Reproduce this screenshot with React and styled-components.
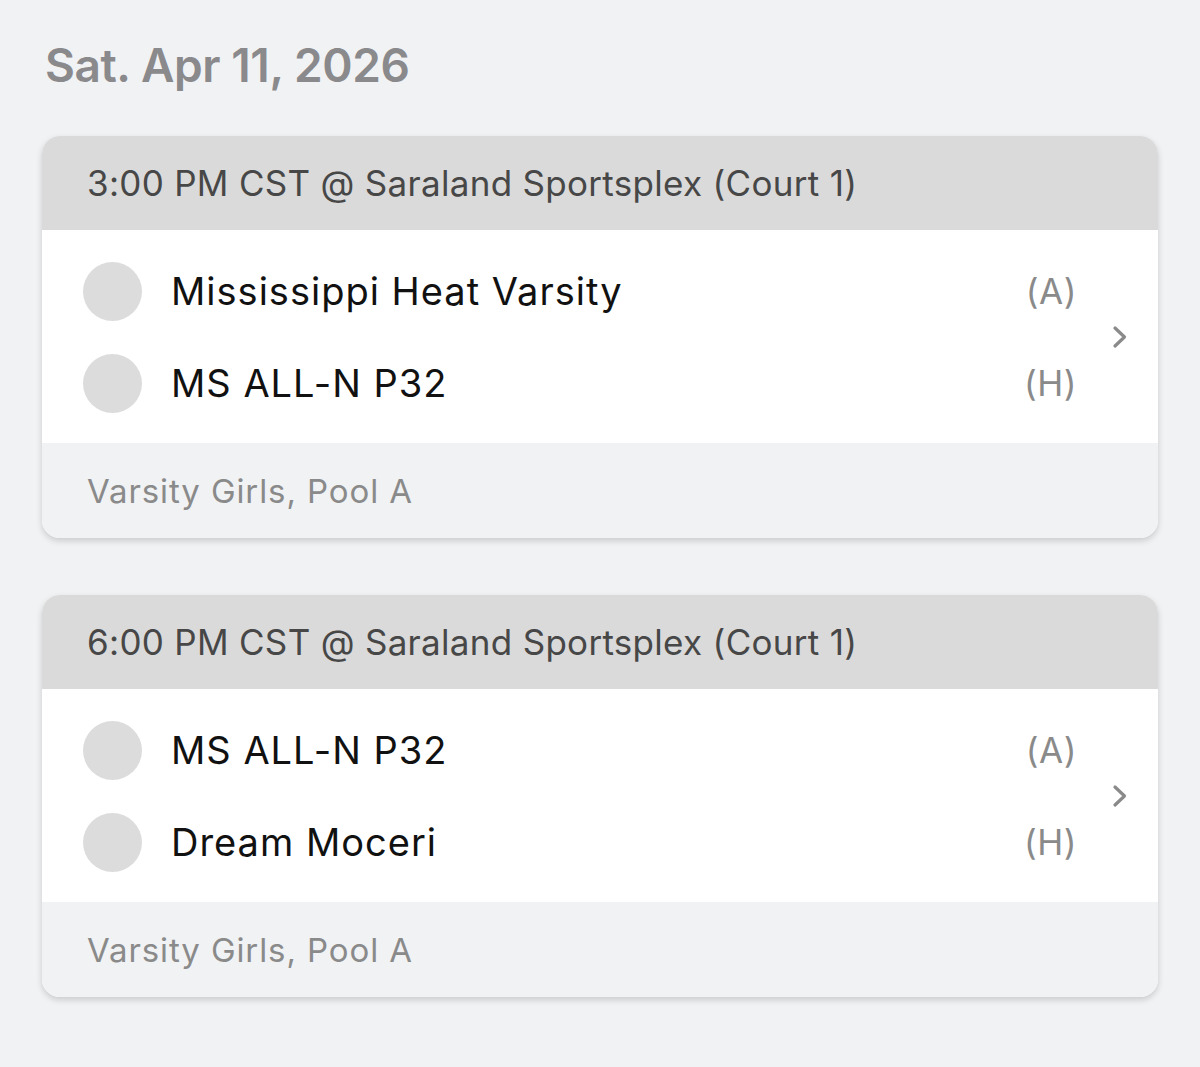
import React from "react";
import styled, { createGlobalStyle } from "styled-components";

const games = [
  {
    time: "3:00 PM CST @ Saraland Sportsplex (Court 1)",
    teams: [
      { name: "Mississippi Heat Varsity", side: "(A)" },
      { name: "MS ALL-N P32", side: "(H)" },
    ],
    division: "Varsity Girls, Pool A",
  },
  {
    time: "6:00 PM CST @ Saraland Sportsplex (Court 1)",
    teams: [
      { name: "MS ALL-N P32", side: "(A)" },
      { name: "Dream Moceri", side: "(H)" },
    ],
    division: "Varsity Girls, Pool A",
  },
];

const GlobalStyle = createGlobalStyle`
  body {
    margin: 0;
    background: #f1f2f4;
    font-family: Inter, "Noto Sans", sans-serif;
  }
`;

const Page = styled.div`
  padding: 35px 42px 40px 42px;
  display: flex;
  flex-direction: column;
  gap: 57px;
`;

const DateTitle = styled.h1`
  margin: 0 0 -16px 3px;
  font-size: 46px;
  font-weight: 600;
  line-height: 60px;
  color: #8a898b;
  letter-spacing: -0.4px;
`;

const Card = styled.div`
  border-radius: 18px;
  overflow: hidden;
  background: #fff;
  box-shadow: 0 3px 6px rgba(0, 0, 0, 0.16);
`;

const CardHeader = styled.div`
  height: 94px;
  display: flex;
  align-items: center;
  padding-left: 45px;
  background: #dadada;
  color: #474747;
  font-size: 35px;
  letter-spacing: 0.3px;
`;

const CardBody = styled.div`
  display: flex;
  align-items: center;
  background: #fff;
`;

const Teams = styled.div`
  flex: 1;
  display: flex;
  flex-direction: column;
  gap: 32px;
  padding: 31px 0 30px 41px;
`;

const TeamRow = styled.div`
  display: flex;
  align-items: center;
  height: 60px;
`;

const Logo = styled.div`
  width: 59px;
  height: 59px;
  border-radius: 50%;
  background: #dcdcdc;
  flex-shrink: 0;
`;

const TeamName = styled.div`
  flex: 1;
  margin-left: 29px;
  font-size: 38px;
  color: #111;
  letter-spacing: 1px;
`;

const Side = styled.div`
  font-size: 35px;
  color: #8a8a8a;
  letter-spacing: 0.5px;
  margin-right: -1px;
`;

const Chevron = styled.div`
  box-sizing: border-box;
  width: 82px;
  display: flex;
  justify-content: center;
  padding-left: 6px;
  color: #8a8a8a;
`;

const CardFooter = styled.div`
  height: 95px;
  display: flex;
  align-items: center;
  padding-left: 45px;
  background: #f1f2f4;
  color: #8a8a8a;
  font-size: 33px;
  letter-spacing: 0.9px;
`;

const ChevronIcon = () => (
  <svg width="18" height="26" viewBox="0 0 18 26" fill="none">
    <path d="M4 4 L13.5 13 L4 22" stroke="currentColor" strokeWidth="3.2" strokeLinecap="round" strokeLinejoin="round" />
  </svg>
);

export default function App() {
  return (
    <>
      <GlobalStyle />
      <Page>
        <DateTitle>Sat. Apr 11, 2026</DateTitle>
        {games.map((game, id) => (
          <Card key={id}>
            <CardHeader>{game.time}</CardHeader>
            <CardBody>
              <Teams>
                {game.teams.map((team, i) => (
                  <TeamRow key={i}>
                    <Logo />
                    <TeamName>{team.name}</TeamName>
                    <Side>{team.side}</Side>
                  </TeamRow>
                ))}
              </Teams>
              <Chevron>
                <ChevronIcon />
              </Chevron>
            </CardBody>
            <CardFooter>{game.division}</CardFooter>
          </Card>
        ))}
      </Page>
    </>
  );
}
